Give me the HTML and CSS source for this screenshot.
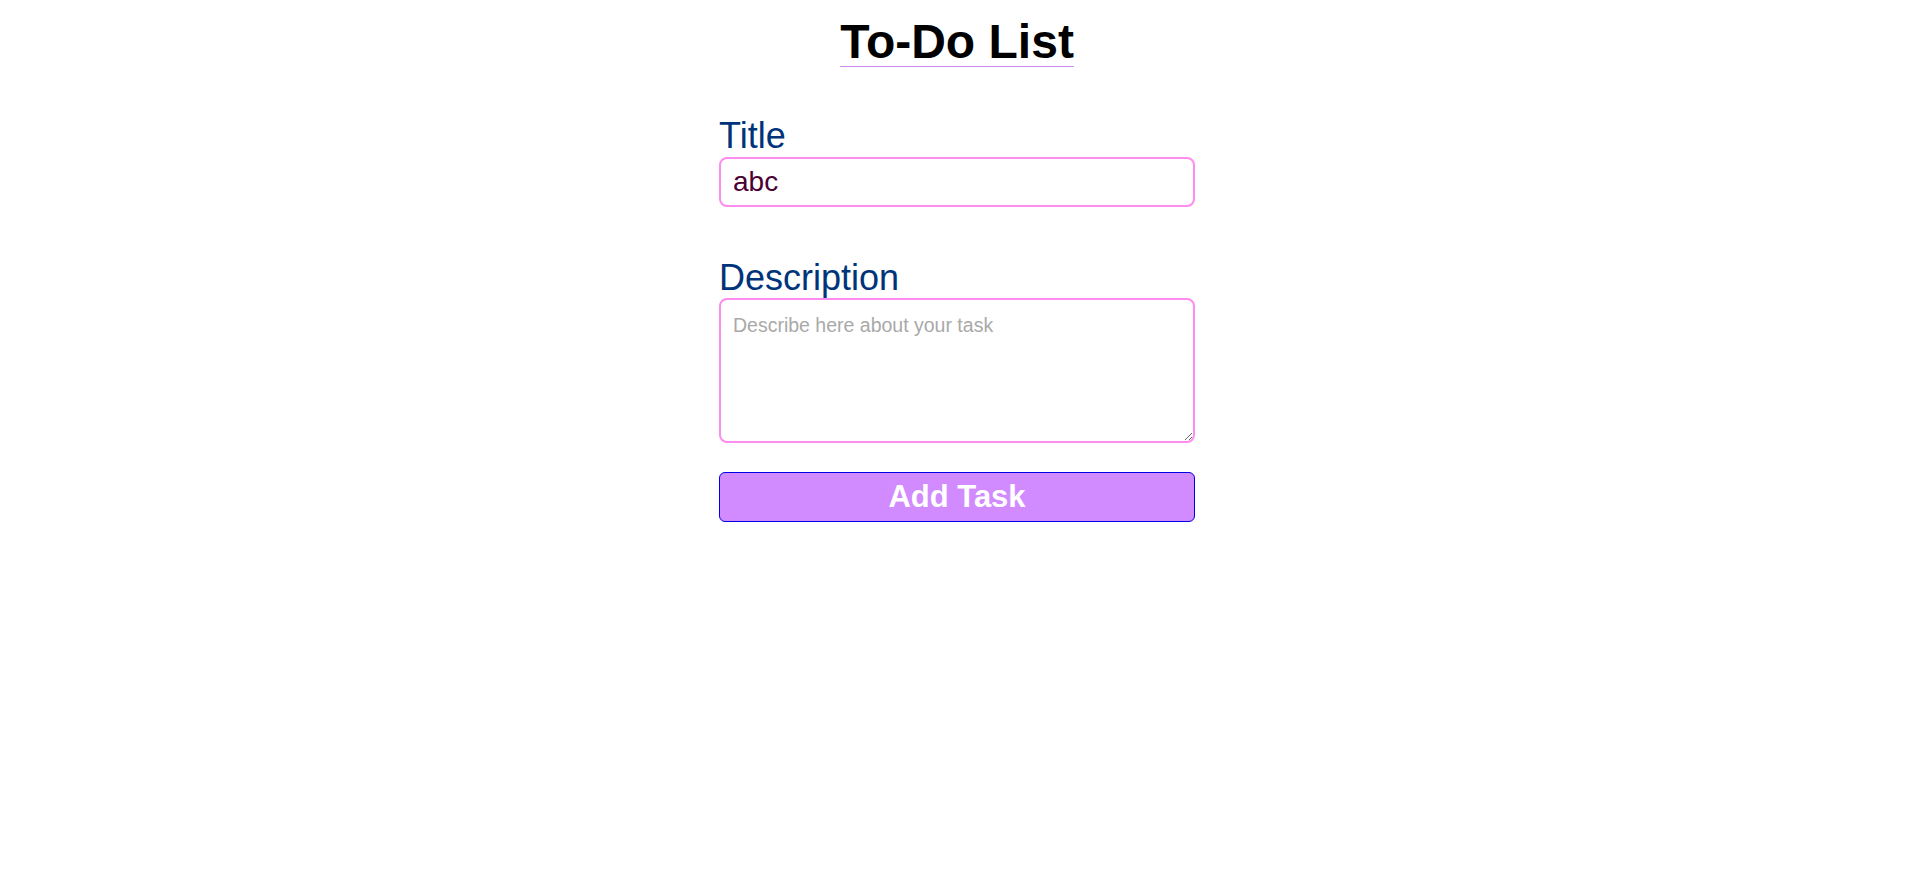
FILE: index.html
```html
<!DOCTYPE html>
<html lang="en">
<head>
<meta charset="utf-8">
<title>To-Do List</title>
<link rel="stylesheet" href="styles.css">
</head>
<body>
<h1 class="page-title"><span class="page-title-text">To-Do List</span></h1>
<form class="task-form">
  <label class="field-label" for="title">Title</label>
  <input class="field-input" id="title" type="text" value="abc">
  <label class="field-label field-label-desc" for="desc">Description</label>
  <textarea class="field-textarea" id="desc" placeholder="Describe here about your task"></textarea>
  <button class="add-btn" type="button">Add Task</button>
</form>
</body>
</html>
```

FILE: styles.css
```css
html, body {
  margin: 0;
  padding: 0;
  background: #ffffff;
}
body {
  font-family: "Liberation Sans", Arial, sans-serif;
  padding-right: 3px;
}
.page-title {
  margin: 14px 0 0;
  text-align: center;
  font-size: 48px;
  line-height: 55px;
  font-weight: bold;
  color: #000000;
}
.page-title-text {
  text-decoration: underline;
  text-decoration-color: #c98bf0;
  text-decoration-thickness: 1px;
  text-underline-offset: 8px;
}
.task-form {
  width: 476px;
  margin: 46px auto 0;
  display: flex;
  flex-direction: column;
}
.field-label {
  font-size: 36px;
  line-height: 41px;
  color: #00347a;
}
.field-label-desc {
  margin-top: 50px;
}
.field-input {
  box-sizing: border-box;
  margin-top: 1px;
  height: 50px;
  border: 2px solid #ff8cef;
  border-radius: 8px;
  padding: 0 12px;
  font-family: "Liberation Sans", Arial, sans-serif;
  font-size: 28px;
  color: #4b0032;
  outline: none;
}
.field-textarea {
  box-sizing: border-box;
  height: 145px;
  border: 2px solid #ff8cef;
  border-radius: 8px;
  padding: 14px 12px;
  font-family: "Liberation Sans", Arial, sans-serif;
  font-size: 19.5px;
  color: #4b0032;
  outline: none;
}
.field-textarea::placeholder {
  color: #a9a9a9;
}
.add-btn {
  margin-top: 29px;
  height: 50px;
  background: #d18bff;
  border: 1px solid #0000e6;
  border-radius: 6px;
  color: #ffffff;
  font-family: "Liberation Sans", Arial, sans-serif;
  font-weight: bold;
  font-size: 31px;
  padding: 0;
  cursor: pointer;
}
```
